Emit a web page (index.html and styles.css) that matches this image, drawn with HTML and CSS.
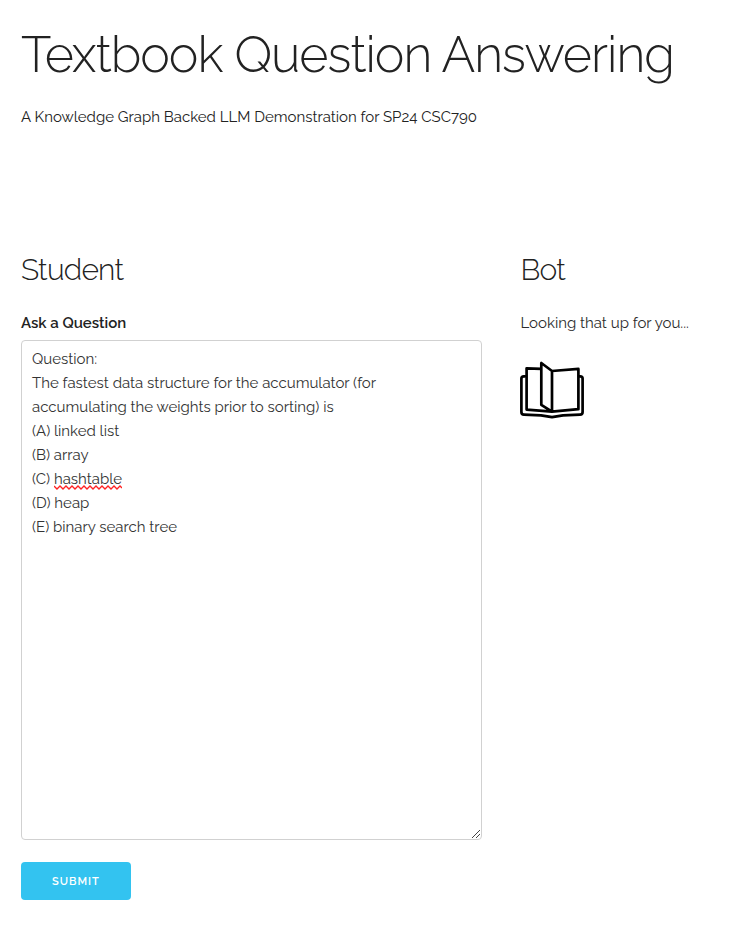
FILE: index.html
```html
<!DOCTYPE html>
<html lang="en">
<head>
<meta charset="utf-8">
<title>Textbook Question Answering</title>
<link rel="stylesheet" href="styles.css">
</head>
<body>
<header>
<h1>Textbook Question Answering</h1>
<p class="intro">A Knowledge Graph Backed LLM Demonstration for SP24 CSC790</p>
</header>
<main class="columns">
<section class="student">
<h2>Student</h2>
<div class="label">Ask a Question</div>
<div class="field"><div>Question:</div><div>The fastest data structure for the accumulator (for</div><div>accumulating the weights prior to sorting) is</div><div>(A) linked list</div><div>(B) array</div><div>(C) <span class="typo">hashtable<svg class="wave" width="68" height="5" viewBox="0 0 68 5"><path d="M0 1L3 4L6 1L9 4L12 1L15 4L18 1L21 4L24 1L27 4L30 1L33 4L36 1L39 4L42 1L45 4L48 1L51 4L54 1L57 4L60 1L63 4L66 1L68 3" fill="none" stroke="#f22" stroke-width="1.3"/></svg></span></div><div>(D) heap</div><div>(E) binary search tree</div>
<svg class="grip" width="10" height="10" viewBox="0 0 10 10"><path d="M1 9L9 1M5 9L9 5" fill="none" stroke="#444"/></svg></div>
<button type="button">SUBMIT</button>
</section>
<section class="bot">
<h2>Bot</h2>
<p>Looking that up for you...</p>
<svg class="book" width="64" height="58" viewBox="0 0 64 58" fill="none" stroke="#000" stroke-width="2.7" stroke-linejoin="round" stroke-linecap="round"><path d="M5 15.300H3.800Q1.400 15.300 1.400 17.500V51Q1.400 53.500 4 53.600L21 54.300L32 56.200L43 54.300L60 53.600Q62.600 53.500 62.600 51V17.500Q62.600 15.300 60.200 15.300H59"/><path d="M21.300 7.800L6.600 7.300V48.600L32 50.600L58.400 48.200V7.900L32 10L21.300 2V43.800L32 50.600V10"/></svg>
</section>
</main>
</body>
</html>
```
FILE: styles.css
```css
*{box-sizing:border-box}
body{margin:0;padding:25px 21px 0;background:#fff;color:#222;font:400 15px/24px Raleway,Lato,sans-serif}
h1{margin:0;font-size:50px;line-height:60px;font-weight:300;letter-spacing:-1px;white-space:nowrap}
p{margin:0}
.intro{margin-top:20px;white-space:nowrap}
.columns{display:grid;grid-template-columns:461px 187px;column-gap:38.500px;margin-top:121px}
h2{margin:0 0 22px;font-size:30px;line-height:39px;font-weight:300;letter-spacing:-.8px}
.label{font-weight:600;margin-bottom:5px}
.field{position:relative;height:500px;padding:6px 10px;border:1px solid #d1d1d1;border-radius:4px;white-space:nowrap;color:#333}
.typo{position:relative}
.wave{position:absolute;left:0;top:15px}
.grip{position:absolute;right:0;bottom:0}
button{display:block;width:110px;height:38px;margin-top:22px;padding:2px 0 0;border:0;border-radius:4px;background:#33c3f0;color:#fff;font:600 11px/36px Raleway,sans-serif;letter-spacing:1px}
.bot p{color:#2c2c2c}
.book{display:block;margin-top:26px;margin-left:-1px}
```
